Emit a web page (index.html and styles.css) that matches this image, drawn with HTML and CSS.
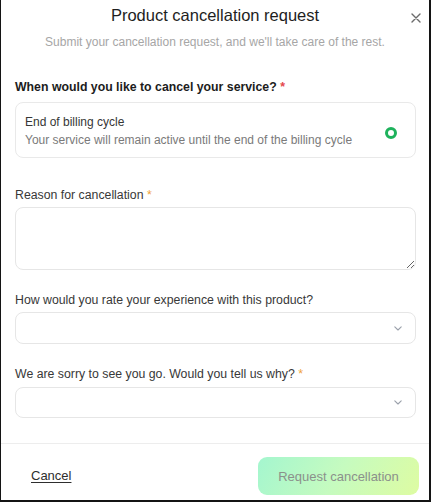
FILE: index.html
```html
<!DOCTYPE html>
<html lang="en">
<head>
<meta charset="utf-8">
<title>Product cancellation request</title>
<link rel="stylesheet" href="styles.css">
</head>
<body>
<div class="dialog">
  <header class="header">
    <h1 class="title">Product cancellation request</h1>
    <button class="close" aria-label="Close">
      <svg width="10" height="10" viewBox="0 0 10 10"><path d="M1 1 L9 9 M9 1 L1 9" stroke="#6b6b6b" stroke-width="1.4" stroke-linecap="round" fill="none"/></svg>
    </button>
    <p class="subtitle">Submit your cancellation request, and we'll take care of the rest.</p>
  </header>

  <main class="form">
    <div class="field field-first">
      <div class="label label-bold">When would you like to cancel your service? <span class="req req-red">*</span></div>
      <div class="option">
        <div class="option-text">
          <div class="option-title">End of billing cycle</div>
          <div class="option-desc">Your service will remain active until the end of the billing cycle</div>
        </div>
        <span class="radio"></span>
      </div>
    </div>

    <div class="field field-reason">
      <div class="label">Reason for cancellation <span class="req">*</span></div>
      <textarea class="textarea"></textarea>
    </div>

    <div class="field field-rate">
      <div class="label">How would you rate your experience with this product?</div>
      <div class="select">
        <svg width="8" height="5" viewBox="0 0 8 5"><path d="M0.8 0.8 L4 4 L7.2 0.8" stroke="#9aa0aa" stroke-width="1.1" fill="none" stroke-linecap="round" stroke-linejoin="round"/></svg>
      </div>
    </div>

    <div class="field field-why">
      <div class="label">We are sorry to see you go. Would you tell us why? <span class="req">*</span></div>
      <div class="select select-short">
        <svg width="8" height="5" viewBox="0 0 8 5"><path d="M0.8 0.8 L4 4 L7.2 0.8" stroke="#9aa0aa" stroke-width="1.1" fill="none" stroke-linecap="round" stroke-linejoin="round"/></svg>
      </div>
    </div>
  </main>

  <footer class="footer">
    <a class="cancel" href="#">Cancel</a>
    <button class="submit">Request cancellation</button>
  </footer>
</div>
</body>
</html>
```

FILE: styles.css
```css
* { box-sizing: border-box; }

html, body {
  margin: 0;
  padding: 0;
  background: #ffffff;
}

body {
  font-family: "Liberation Sans", Arial, sans-serif;
  color: #2b2b2b;
}

.dialog {
  width: 431px;
  height: 502px;
  border-left: 1px solid #141414;
  border-right: 2px solid #141414;
  border-bottom: 2px solid #141414;
  background: #fff;
  display: flex;
  flex-direction: column;
}

.header {
  position: relative;
  text-align: center;
}

.title {
  margin: 0;
  padding-top: 5px;
  font-size: 16.5px;
  line-height: 20px;
  font-weight: normal;
  color: #1e1e1e;
}

.close {
  position: absolute;
  top: 13px;
  right: 8px;
  width: 10px;
  height: 10px;
  padding: 0;
  border: 0;
  background: transparent;
  display: flex;
}

.subtitle {
  margin: 9px 0 0;
  font-size: 12px;
  line-height: 16px;
  color: #a6a6a6;
}

.form {
  flex: 1;
  padding: 0 13px 0 14px;
}

.field { display: flex; flex-direction: column; }
.field-first { margin-top: 29px; }
.field-reason { margin-top: 29px; }
.field-rate { margin-top: 22px; }
.field-why { margin-top: 22px; }

.label {
  font-size: 12.3px;
  line-height: 16px;
  color: #383838;
}

.label-bold {
  font-weight: bold;
  color: #1c1c1c;
}

.req { color: #f0a23a; }
.req-red { color: #e5484d; }

.option {
  margin-top: 7px;
  height: 56px;
  border: 1px solid #e9e9e9;
  border-radius: 8px;
  padding: 10px 18px 8px 9px;
  display: flex;
  align-items: center;
  justify-content: space-between;
}

.option-title {
  font-size: 12px;
  line-height: 18px;
  color: #363636;
}

.option-desc {
  font-size: 12px;
  line-height: 18px;
  color: #7a7a7a;
}

.radio {
  width: 12px;
  height: 12px;
  border: 3px solid #1eb25c;
  border-radius: 50%;
  margin-top: 3px;
}

.textarea {
  margin-top: 4px;
  width: 100%;
  height: 63px;
  border: 1px solid #e6e6e6;
  border-radius: 8px;
  resize: vertical;
  font-family: inherit;
  font-size: 12px;
  outline: none;
  background: #fff;
}

.select {
  margin-top: 4px;
  height: 32px;
  border: 1px solid #e6e6e6;
  border-radius: 8px;
  background: #fff;
  display: flex;
  align-items: center;
  justify-content: flex-end;
  padding-right: 13px;
}

.select-short {
  margin-top: 5px;
  height: 31px;
}

.footer {
  border-top: 1px solid #ededed;
  height: 57px;
  display: flex;
  align-items: flex-start;
  justify-content: space-between;
  padding: 13px 10px 0 30px;
}

.cancel {
  font-size: 13px;
  line-height: 38px;
  color: #2e2e2e;
  text-decoration: underline;
  text-underline-offset: 2px;
}

.submit {
  width: 161px;
  height: 38px;
  border: 0;
  border-radius: 9px;
  background: linear-gradient(120deg, #a4f6cf 0%, #c6fbbf 50%, #defca2 100%);
  color: #8b908b;
  font-family: inherit;
  font-size: 13px;
  padding: 0;
}
```
